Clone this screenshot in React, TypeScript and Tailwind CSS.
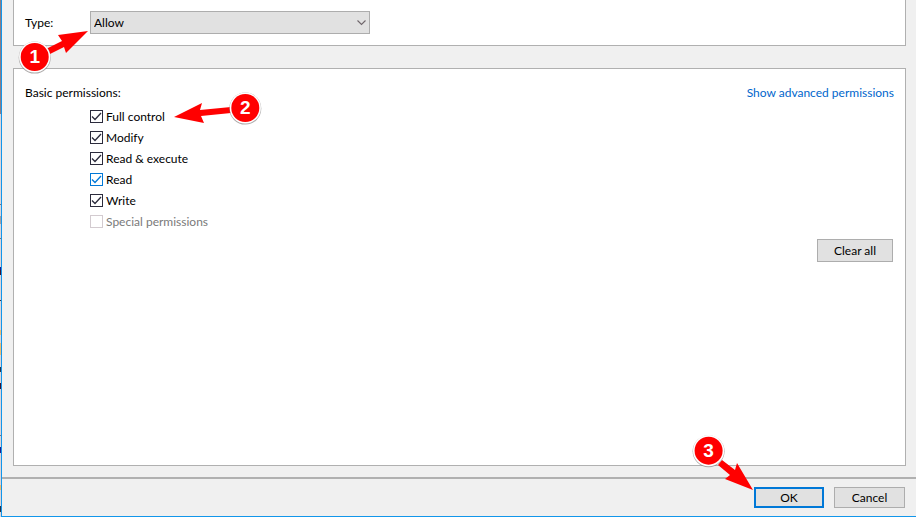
import React, { useState } from 'react';

const initialPermissions = [
  { id: 'full', label: 'Full control', checked: true },
  { id: 'modify', label: 'Modify', checked: true },
  { id: 'execute', label: 'Read & execute', checked: true },
  { id: 'read', label: 'Read', checked: true, active: true },
  { id: 'write', label: 'Write', checked: true },
  { id: 'special', label: 'Special permissions', checked: false, disabled: true }
];

// Slivers of the window behind the dialog
const backdrop = [
  { height: 114, color: '#8b7b84' },
  { height: 90, color: '#dcd4da' },
  { height: 1, color: '#77757c' },
  { height: 11, color: '#dcd4da' },
  { height: 8, color: '#a39ea3' },
  { height: 14, color: '#dcd4da' },
  { height: 1, color: '#77757c' },
  { height: 28, color: '#dcd4da' },
  { height: 3, color: '#1d1d8c' },
  { height: 5, color: '#3a1330' },
  { height: 25, color: '#dcd4da' },
  { height: 1, color: '#28334a' },
  { height: 29, color: '#dcd4da' },
  { height: 5, color: '#f0bd72' },
  { height: 8, color: '#dcd4da' },
  { height: 12, color: '#f0bd72' },
  { height: 12, color: '#dcd4da' },
  { height: 5, color: '#28334a' },
  { height: 11, color: '#dcd4da' },
  { height: 6, color: '#3a1330' },
  { height: 46, color: '#dcd4da' },
  { height: 1, color: '#77757c' },
  { height: 11, color: '#dcd4da' },
  { height: 6, color: '#1d1d8c' },
  { height: 32, color: '#dcd4da' },
  { height: 5, color: '#f0bd72' },
  { height: 16, color: '#dcd4da' },
  { height: 6, color: '#28334a' }
];

type CalloutProps = {
  className: string;
  width: number;
  height: number;
  cx: number;
  cy: number;
  arrow: string;
  number: string;
};

const Callout = ({ className, width, height, cx, cy, arrow, number }: CalloutProps) => (
  <svg
    className={`pointer-events-none absolute z-10 max-w-none overflow-visible ${className}`}
    width={width}
    height={height}
    viewBox={`0 0 ${width} ${height}`}
    aria-hidden="true"
  >
    <polygon points={arrow} fill="#ff0000" />
    <circle cx={cx} cy={cy + 0.6} r="16" fill="#77717199" />
    <circle cx={cx} cy={cy} r="15.6" fill="#ffffff" />
    <circle cx={cx} cy={cy} r="14" fill="#ff0000" />
    <text
      x={cx}
      y={cy + 6}
      textAnchor="middle"
      fill="#ffffff"
      className="font-['Liberation_Sans',sans-serif] text-[19px] font-bold"
    >
      {number}
    </text>
  </svg>
);

const App = () => {
  const [permissions, setPermissions] = useState(initialPermissions);

  const toggle = (id: string) =>
    setPermissions(permissions.map((p) => (p.id === id ? { ...p, checked: !p.checked } : p)));

  const clearAll = () => setPermissions(permissions.map((p) => ({ ...p, checked: false })));

  return (
    <div className="flex h-screen overflow-hidden bg-[#f0f0f0] font-['Lato',sans-serif] text-xs text-black">
      <div className="w-px shrink-0 overflow-hidden bg-[#dcd4da]">
        {backdrop.map((part, index) => (
          <div key={index} style={{ height: part.height, background: part.color }}></div>
        ))}
      </div>

      <div className="flex min-w-0 flex-1 flex-col border-b border-l border-[#1296ea]">
        <main className="flex flex-1 flex-col gap-[22px] pr-[10px] pb-[11px] pl-[11px]">
          {/* Type */}
          <section className="flex items-center border border-t-0 border-[#b0b0b0] bg-white pt-[11px] pb-[11px] pl-[11px]">
            <label htmlFor="type" className="w-[65px]">Type:</label>
            <div className="relative w-[280px]">
              <select
                id="type"
                defaultValue="Allow"
                className="block h-[23px] w-full appearance-none border border-[#adadad] bg-[#e1e1e1] pl-[3px] text-xs outline-none"
              >
                <option>Allow</option>
                <option>Deny</option>
              </select>
              <svg className="pointer-events-none absolute top-2 right-1" width="9" height="7" viewBox="0 0 9 7" aria-hidden="true">
                <path d="M0.5 1.5 L4.5 5.5 L8.5 1.5" fill="none" stroke="#6f666b" strokeWidth="1.1" />
              </svg>
              <Callout
                className="top-[18px] -left-[73px]"
                width={72}
                height={46}
                cx={17.7}
                cy={28}
                arrow="71,2 41,6 45,12 29,20 33,25 47,18 49,24"
                number="1"
              />
            </div>
          </section>

          {/* Permissions */}
          <section className="flex-1 border border-[#b0b0b0] bg-white px-[11px] pt-4">
            <div className="flex items-center justify-between">
              <h2>Basic permissions:</h2>
              <a href="#advanced" className="text-[#0066cc]">Show advanced permissions</a>
            </div>
            <ul className="mt-[5px] pl-[65px]">
              {permissions.map((p) => (
                <li key={p.id} className="relative flex h-[21px] items-center">
                  <span className="grid size-[13px] shrink-0">
                    <input
                      id={p.id}
                      type="checkbox"
                      checked={p.checked}
                      disabled={p.disabled}
                      onChange={() => toggle(p.id)}
                      className={`col-start-1 row-start-1 size-[13px] appearance-none border bg-white ${
                        p.disabled ? 'border-[#d3cbd0]' : p.active ? 'border-[#0078d7]' : 'border-[#2b2b3c]'
                      }`}
                    />
                    {p.checked && (
                      <svg className="pointer-events-none col-start-1 row-start-1" width="13" height="13" viewBox="0 0 13 13" aria-hidden="true">
                        <path d="M2 6.5 L5 9.5 L11 3" fill="none" stroke={p.active ? '#0078d7' : '#2b2b3c'} strokeWidth="1.3" />
                      </svg>
                    )}
                  </span>
                  <label htmlFor={p.id} className={`pl-[3px] ${p.disabled ? 'text-[#7a7a7a]' : ''}`}>{p.label}</label>
                  {p.id === 'full' && (
                    <Callout
                      className="-top-[15px] left-[83px]"
                      width={92}
                      height={34}
                      cx={72.3}
                      cy={17}
                      arrow="1,26 29,12 27,19 58,16 58,22 28,25 31,32"
                      number="2"
                    />
                  )}
                </li>
              ))}
            </ul>
            <div className="flex justify-end pt-[7px]">
              <button
                type="button"
                onClick={clearAll}
                className="mr-px h-[23px] w-[76px] border border-[#adadad] bg-[#e1e1e1]"
              >
                Clear all
              </button>
            </div>
          </section>
        </main>

        <footer className="flex justify-end gap-[10px] border-t-2 border-[#b0b0b0] pt-2 pr-[11px] pb-2">
          <div className="relative">
            <button type="button" className="block h-[21px] w-[70px] border-2 border-[#0078d7] bg-[#e1e1e1] leading-4">
              OK
            </button>
            <Callout
              className="-top-[54px] -left-[63px]"
              width={63}
              height={58}
              cx={17.6}
              cy={17.7}
              arrow="62,57 46,30 44,37 31,27 27,32 39,42 34,46"
              number="3"
            />
          </div>
          <button type="button" className="h-[21px] w-[71px] border border-[#adadad] bg-[#e1e1e1]">
            Cancel
          </button>
        </footer>
      </div>
    </div>
  );
};

export default App;
